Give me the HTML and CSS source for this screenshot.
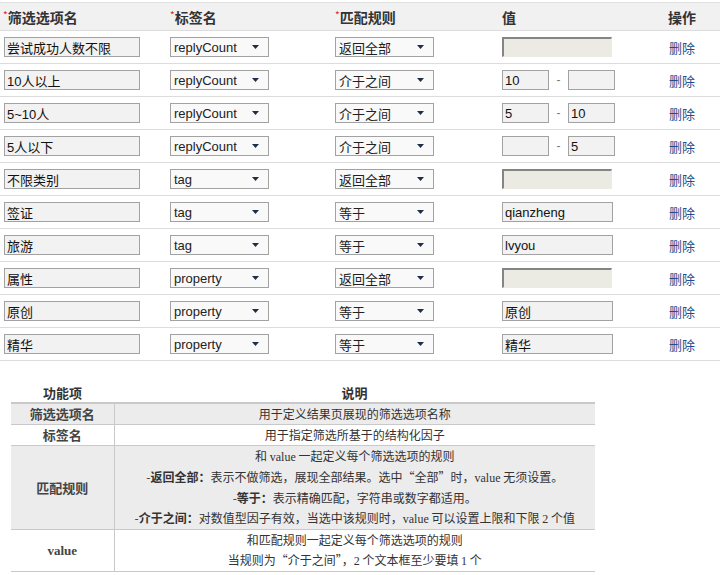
FILE: index.html
```html
<!DOCTYPE html>
<html lang="zh-CN">
<head>
<meta charset="utf-8">
<title>筛选选项</title>
<link rel="stylesheet" href="styles.css">
</head>
<body>
<table class="rules">
  <colgroup>
    <col class="c1"><col class="c2"><col class="c3"><col class="c4"><col class="c5">
  </colgroup>
  <thead>
    <tr>
      <th><span class="req">*</span>筛选选项名</th>
      <th><span class="req">*</span>标签名</th>
      <th><span class="req">*</span>匹配规则</th>
      <th>值</th>
      <th>操作</th>
    </tr>
  </thead>
  <tbody>
    <tr>
      <td><input class="txt name" value="尝试成功人数不限"></td>
      <td><div class="sel"><span>replyCount</span><svg class="arr" width="7" height="4" viewBox="0 0 7 4"><path d="M0 0H7L3.5 4Z"/></svg></div></td>
      <td><div class="sel"><span>返回全部</span><svg class="arr" width="7" height="4" viewBox="0 0 7 4"><path d="M0 0H7L3.5 4Z"/></svg></div></td>
      <td><input class="txt dis" disabled></td>
      <td><a class="del" href="#">删除</a></td>
    </tr>
    <tr>
      <td><input class="txt name" value="10人以上"></td>
      <td><div class="sel"><span>replyCount</span><svg class="arr" width="7" height="4" viewBox="0 0 7 4"><path d="M0 0H7L3.5 4Z"/></svg></div></td>
      <td><div class="sel"><span>介于之间</span><svg class="arr" width="7" height="4" viewBox="0 0 7 4"><path d="M0 0H7L3.5 4Z"/></svg></div></td>
      <td><div class="range"><input class="txt small" value="10"><span class="dash">-</span><input class="txt small" value=""></div></td>
      <td><a class="del" href="#">删除</a></td>
    </tr>
    <tr>
      <td><input class="txt name" value="5~10人"></td>
      <td><div class="sel"><span>replyCount</span><svg class="arr" width="7" height="4" viewBox="0 0 7 4"><path d="M0 0H7L3.5 4Z"/></svg></div></td>
      <td><div class="sel"><span>介于之间</span><svg class="arr" width="7" height="4" viewBox="0 0 7 4"><path d="M0 0H7L3.5 4Z"/></svg></div></td>
      <td><div class="range"><input class="txt small" value="5"><span class="dash">-</span><input class="txt small" value="10"></div></td>
      <td><a class="del" href="#">删除</a></td>
    </tr>
    <tr>
      <td><input class="txt name" value="5人以下"></td>
      <td><div class="sel"><span>replyCount</span><svg class="arr" width="7" height="4" viewBox="0 0 7 4"><path d="M0 0H7L3.5 4Z"/></svg></div></td>
      <td><div class="sel"><span>介于之间</span><svg class="arr" width="7" height="4" viewBox="0 0 7 4"><path d="M0 0H7L3.5 4Z"/></svg></div></td>
      <td><div class="range"><input class="txt small" value=""><span class="dash">-</span><input class="txt small" value="5"></div></td>
      <td><a class="del" href="#">删除</a></td>
    </tr>
    <tr>
      <td><input class="txt name" value="不限类别"></td>
      <td><div class="sel"><span>tag</span><svg class="arr" width="7" height="4" viewBox="0 0 7 4"><path d="M0 0H7L3.5 4Z"/></svg></div></td>
      <td><div class="sel"><span>返回全部</span><svg class="arr" width="7" height="4" viewBox="0 0 7 4"><path d="M0 0H7L3.5 4Z"/></svg></div></td>
      <td><input class="txt dis" disabled></td>
      <td><a class="del" href="#">删除</a></td>
    </tr>
    <tr>
      <td><input class="txt name" value="签证"></td>
      <td><div class="sel"><span>tag</span><svg class="arr" width="7" height="4" viewBox="0 0 7 4"><path d="M0 0H7L3.5 4Z"/></svg></div></td>
      <td><div class="sel"><span>等于</span><svg class="arr" width="7" height="4" viewBox="0 0 7 4"><path d="M0 0H7L3.5 4Z"/></svg></div></td>
      <td><input class="txt val" value="qianzheng"></td>
      <td><a class="del" href="#">删除</a></td>
    </tr>
    <tr>
      <td><input class="txt name" value="旅游"></td>
      <td><div class="sel"><span>tag</span><svg class="arr" width="7" height="4" viewBox="0 0 7 4"><path d="M0 0H7L3.5 4Z"/></svg></div></td>
      <td><div class="sel"><span>等于</span><svg class="arr" width="7" height="4" viewBox="0 0 7 4"><path d="M0 0H7L3.5 4Z"/></svg></div></td>
      <td><input class="txt val" value="lvyou"></td>
      <td><a class="del" href="#">删除</a></td>
    </tr>
    <tr>
      <td><input class="txt name" value="属性"></td>
      <td><div class="sel"><span>property</span><svg class="arr" width="7" height="4" viewBox="0 0 7 4"><path d="M0 0H7L3.5 4Z"/></svg></div></td>
      <td><div class="sel"><span>返回全部</span><svg class="arr" width="7" height="4" viewBox="0 0 7 4"><path d="M0 0H7L3.5 4Z"/></svg></div></td>
      <td><input class="txt dis" disabled></td>
      <td><a class="del" href="#">删除</a></td>
    </tr>
    <tr>
      <td><input class="txt name" value="原创"></td>
      <td><div class="sel"><span>property</span><svg class="arr" width="7" height="4" viewBox="0 0 7 4"><path d="M0 0H7L3.5 4Z"/></svg></div></td>
      <td><div class="sel"><span>等于</span><svg class="arr" width="7" height="4" viewBox="0 0 7 4"><path d="M0 0H7L3.5 4Z"/></svg></div></td>
      <td><input class="txt val" value="原创"></td>
      <td><a class="del" href="#">删除</a></td>
    </tr>
    <tr>
      <td><input class="txt name" value="精华"></td>
      <td><div class="sel"><span>property</span><svg class="arr" width="7" height="4" viewBox="0 0 7 4"><path d="M0 0H7L3.5 4Z"/></svg></div></td>
      <td><div class="sel"><span>等于</span><svg class="arr" width="7" height="4" viewBox="0 0 7 4"><path d="M0 0H7L3.5 4Z"/></svg></div></td>
      <td><input class="txt val" value="精华"></td>
      <td><a class="del" href="#">删除</a></td>
    </tr>
  </tbody>
</table>

<table class="help">
  <colgroup><col class="h1"><col class="h2"></colgroup>
  <thead>
    <tr><th>功能项</th><th>说明</th></tr>
  </thead>
  <tbody>
    <tr class="gray">
      <td class="key">筛选选项名</td>
      <td class="desc">用于定义结果页展现的筛选选项名称</td>
    </tr>
    <tr>
      <td class="key">标签名</td>
      <td class="desc">用于指定筛选所基于的结构化因子</td>
    </tr>
    <tr class="gray">
      <td class="key">匹配规则</td>
      <td class="desc">
        <div>和 <span class="en">value</span> 一起定义每个筛选选项的规则</div>
        <div>-<b>返回全部：</b>表示不做筛选，展现全部结果。选中“全部”时，<span class="en">value</span> 无须设置。</div>
        <div>-<b>等于：</b>表示精确匹配，字符串或数字都适用。</div>
        <div>-<b>介于之间：</b>对数值型因子有效，当选中该规则时，<span class="en">value</span> 可以设置上限和下限 <span class="en">2</span> 个值</div>
      </td>
    </tr>
    <tr>
      <td class="key en-key">value</td>
      <td class="desc">
        <div>和匹配规则一起定义每个筛选选项的规则</div>
        <div>当规则为“介于之间”，<span class="en">2</span> 个文本框至少要填 <span class="en">1</span> 个</div>
      </td>
    </tr>
  </tbody>
</table>
</body>
</html>
```
FILE: styles.css
```css
html, body {
  margin: 0;
  padding: 0;
  background: #ffffff;
}
body {
  font-family: "Liberation Sans", "Noto Sans CJK SC", sans-serif;
  color: #000;
}

/* ---------- top rules table ---------- */
.rules {
  width: 720px;
  margin-top: 2px;
  border-collapse: collapse;
  table-layout: fixed;
}
.rules .c1 { width: 167px; }
.rules .c2 { width: 165px; }
.rules .c3 { width: 167px; }
.rules .c4 { width: 166px; }
.rules .c5 { width: 55px; }

.rules th {
  height: 27px;
  padding: 0 0 0 3px;
  background: #f1f1f1;
  border-top: 1px solid #e2e2e2;
  border-bottom: 1px solid #dcdcdc;
  text-align: left;
  font-family: "Noto Sans CJK SC", sans-serif;
  font-size: 14px;
  font-weight: 700;
  color: #333;
  vertical-align: middle;
}
.req {
  color: #e02020;
  font-size: 10px;
  font-weight: 400;
  vertical-align: 4px;
}
.rules td {
  height: 32px;
  padding: 0 0 0 4px;
  border-bottom: 1px solid #dcdcdc;
  vertical-align: middle;
}
.rules td:nth-child(2),
.rules td:nth-child(3),
.rules td:nth-child(4) { padding-left: 3px; }

.txt {
  box-sizing: border-box;
  height: 20px;
  margin: 0;
  padding: 0 2px;
  border: 1px solid #a2a2a2;
  background: #f2f2f2;
  font-family: "Liberation Sans", "Noto Sans CJK SC", sans-serif;
  font-size: 13px;
  color: #111;
  display: block;
  outline: none;
}
.txt.name { width: 136px; }
.txt.val { width: 111px; }
.txt.small { width: 47px; }
.txt.dis {
  width: 110px;
  background: #ebebe4;
  border-top: 2px solid #858585;
  border-left: 2px solid #858585;
  border-right: 1px solid #ebebe4;
  border-bottom: 1px solid #ebebe4;
}
.range {
  display: flex;
  align-items: center;
}
.dash {
  width: 19px;
  text-align: center;
  font-size: 12px;
  color: #777;
}

.sel {
  box-sizing: border-box;
  width: 99px;
  height: 20px;
  border: 1px solid #a2a2a2;
  background: #f9f9f9;
  display: flex;
  align-items: center;
  justify-content: space-between;
  padding: 0 9px 0 3px;
  font-family: "Liberation Sans", "Noto Sans CJK SC", sans-serif;
  font-size: 13px;
  color: #222;
}
.sel .arr { fill: #1e2d48; display: block; }

.del {
  font-family: "Noto Sans CJK SC", sans-serif;
  font-size: 13px;
  color: #1d4f8f;
  text-decoration: none;
}

/* ---------- help table ---------- */
.help {
  margin: 21px 0 0 11px;
  width: 584px;
  border-collapse: collapse;
  table-layout: fixed;
  font-family: "Noto Sans CJK SC", sans-serif;
  color: #333;
}
.help .h1 { width: 103px; }
.help .h2 { width: 481px; }
.help th {
  height: 20px;
  padding: 0;
  font-size: 13px;
  font-weight: 700;
  color: #333;
  text-align: center;
  border-bottom: 2px solid #c9c9c9;
}
.help td {
  padding: 0;
  line-height: 20px;
  text-align: center;
  border-bottom: 1px solid #c9c9c9;
  vertical-align: middle;
}
.help tr.gray td { background: #ececec; }
.help .key {
  font-size: 13px;
  font-weight: 700;
  color: #444;
}
.help .desc {
  font-size: 12px;
  border-left: 1px solid #c9c9c9;
}
.help .desc b { font-weight: 700; color: #333; }
.help .en {
  font-family: "Liberation Serif", serif;
  font-size: 12px;
}
.help .en-key {
  font-family: "Liberation Serif", serif;
  font-size: 13px;
}
```
